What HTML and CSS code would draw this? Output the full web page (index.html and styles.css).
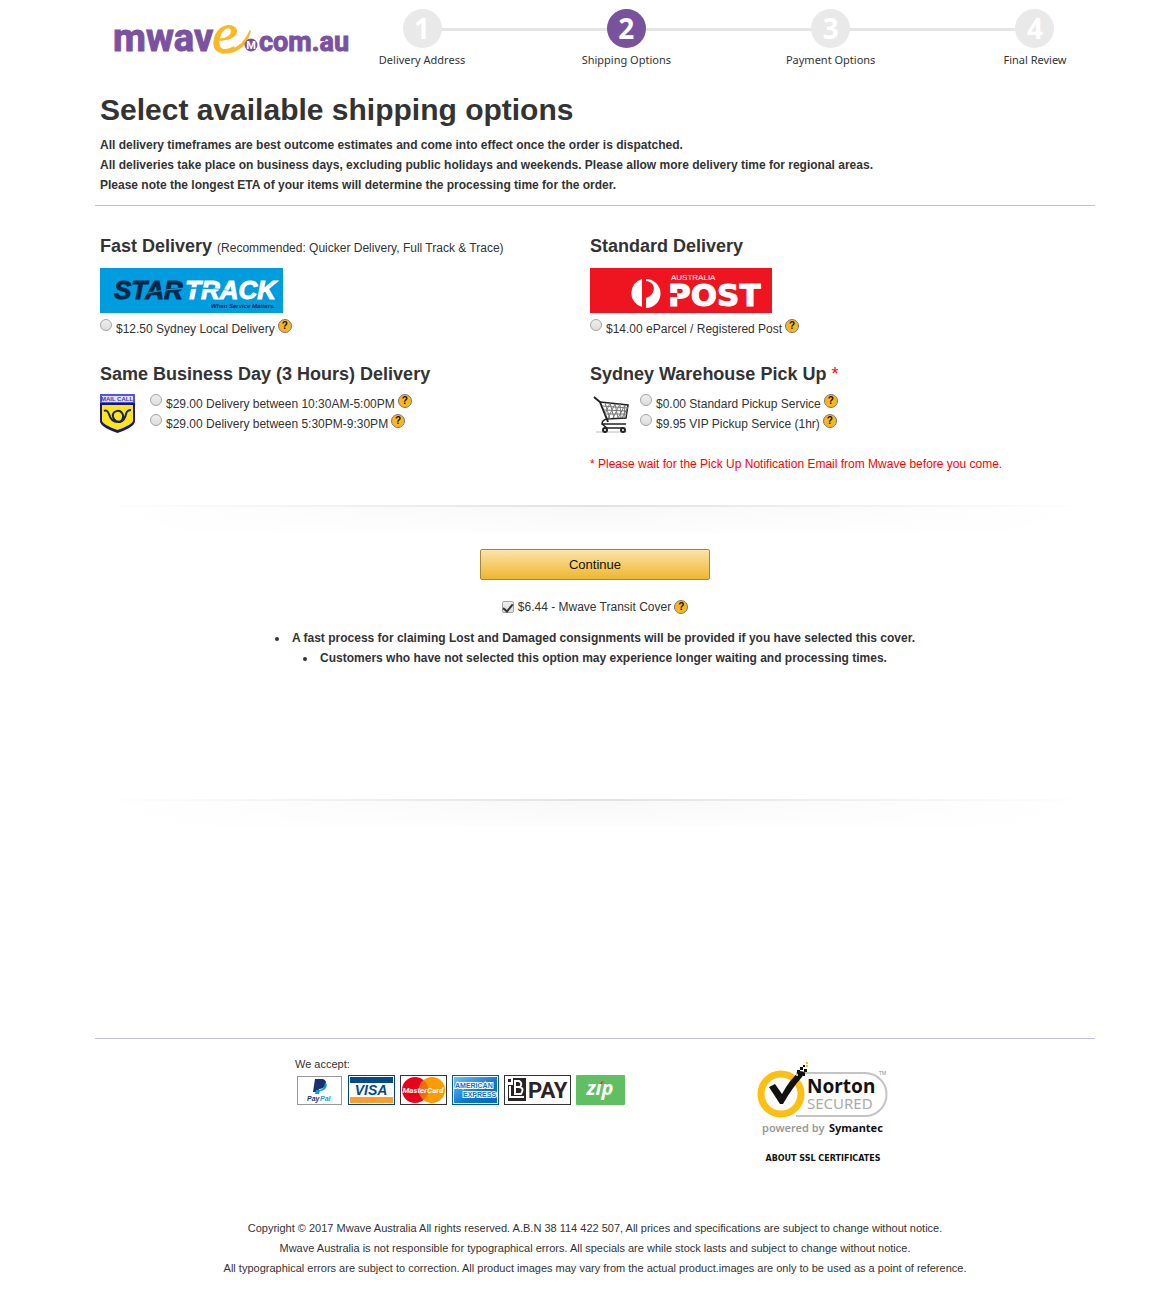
FILE: index.html
```html
<!DOCTYPE html>
<html lang="en">
<head>
<meta charset="utf-8">
<meta name="viewport" content="width=device-width, initial-scale=1">
<title>Mwave - Shipping Options</title>
<link rel="stylesheet" href="styles.css">
</head>
<body>
<div class="page">
  <header class="header">
    <a class="logo" href="#" aria-label="mwave.com.au">
      <svg width="240" height="44" viewBox="0 0 240 44">
        <g font-weight="700" fill="#7a529f" stroke="#7a529f" stroke-width="1">
          <text class="logo-text" x="1" y="36" font-size="38">mwav</text>
          <text class="logo-text" x="147" y="36" font-size="27">com.au</text>
        </g>
        <text class="logo-e" x="100" y="37" font-size="58" fill="#fbb823" stroke="#fbb823">e</text>
        <path d="M110 36.500C124 36 132 29 138 16C135 29 127 38 110 38Z" fill="#fbb823" stroke="#fbb823" stroke-width="1.500" stroke-linejoin="round"/>
        <circle cx="139" cy="30" r="6.500" fill="#7a529f"/>
        <text class="logo-text" x="139" y="34" font-size="11" font-weight="700" fill="#fff" text-anchor="middle">M</text>
      </svg>
    </a>
    <ol class="steps">
      <li class="step"><span class="step-number">1</span><span class="step-label">Delivery Address</span></li>
      <li class="step step-current" aria-current="step"><span class="step-number">2</span><span class="step-label">Shipping Options</span></li>
      <li class="step"><span class="step-number">3</span><span class="step-label">Payment Options</span></li>
      <li class="step"><span class="step-number">4</span><span class="step-label">Final Review</span></li>
    </ol>
  </header>

  <main>
    <section class="intro">
      <h1>Select available shipping options</h1>
      <p>All delivery timeframes are best outcome estimates and come into effect once the order is dispatched.<br>
      All deliveries take place on business days, excluding public holidays and weekends. Please allow more delivery time for regional areas.<br>
      Please note the longest ETA of your items will determine the processing time for the order.</p>
    </section>

    <form>
      <div class="methods">
        <section class="method">
          <h2>Fast Delivery <small>(Recommended: Quicker Delivery, Full Track &amp; Trace)</small></h2>
          <svg class="carrier" width="183" height="45" viewBox="0 0 183 45" role="img" aria-label="StarTrack">
            <rect width="183" height="45" fill="#009ce0"/>
            <g class="carrier-text" font-size="26" font-weight="700" font-style="italic">
              <text x="14" y="31" fill="#06294b" stroke="#06294b">STAR</text>
              <text x="85" y="31" fill="#fff" stroke="#fff">TRACK</text>
            </g>
            <path d="M40 27Q84 14 134 23Q84 17 40 27Z" fill="#009ce0"/>
            <text class="carrier-text" x="111" y="40" font-size="6" font-weight="700" font-style="italic" fill="#06294b">When Service Matters.</text>
          </svg>
          <div class="option">
            <input type="radio" name="shipping" id="star"><label for="star">$12.50 Sydney Local Delivery</label>
            <button class="help" type="button" aria-label="About Sydney Local Delivery">?</button>
          </div>
        </section>

        <section class="method">
          <h2>Standard Delivery</h2>
          <svg class="carrier" width="182" height="45" viewBox="0 0 182 45" role="img" aria-label="Australia Post">
            <rect width="182" height="45" fill="#ee1520"/>
            <path d="M52 11A14.500 14.500 0 0 0 52 39Z" fill="#fff"/>
            <path d="M56 11A14.500 14.500 0 0 1 56 40V30C66 27 67 14 56 13Z" fill="#fff"/>
            <text class="carrier-small" x="81" y="12" font-size="8" fill="#fff">AUSTRALIA</text>
            <text class="carrier-heavy" x="78" y="38" font-size="31" font-weight="700" fill="#fff" stroke="#fff">POST</text>
            <path d="M78 25h9v4h-9z" fill="#ee1520"/>
          </svg>
          <div class="option">
            <input type="radio" name="shipping" id="post"><label for="post">$14.00 eParcel / Registered Post</label>
            <button class="help" type="button" aria-label="About eParcel">?</button>
          </div>
        </section>

        <section class="method">
          <h2>Same Business Day (3 Hours) Delivery</h2>
          <div class="service">
            <svg width="35" height="40" viewBox="0 0 35 40" role="img" aria-label="Mail Call">
              <path d="M0 0H35V27Q35 33 17.500 39Q0 33 0 27Z" fill="#16167e"/>
              <path d="M0 0H35V9H0Z" fill="#5256d6"/>
              <path d="M2 2H33V8H2Z" fill="#dfe2ff"/>
              <path d="M2 11H33V27Q32 31 17.500 36Q3 31 2 27Z" fill="#fbe51b"/>
              <text class="carrier-small" x="17" y="7" font-size="6" font-weight="700" fill="#3a3ab8" text-anchor="middle">MAIL CALL</text>
              <path d="M4 17Q7 15 9 20Q11 28 18 28Q24 27 23 21Q21 16 17 17Q12 18 13 23Q15 28 20 28Q25 26 26 20Q27 16 31 16" fill="none" stroke="#1d1d64" stroke-width="2"/>
            </svg>
            <div>
              <div class="option">
                <input type="radio" name="shipping" id="day"><label for="day">$29.00 Delivery between 10:30AM-5:00PM</label>
                <button class="help" type="button" aria-label="About daytime delivery">?</button>
              </div>
              <div class="option">
                <input type="radio" name="shipping" id="evening"><label for="evening">$29.00 Delivery between 5:30PM-9:30PM</label>
                <button class="help" type="button" aria-label="About evening delivery">?</button>
              </div>
            </div>
          </div>
        </section>

        <section class="method">
          <h2>Sydney Warehouse Pick Up <span class="required">*</span></h2>
          <div class="service">
            <svg width="40" height="40" viewBox="0 0 40 40" fill="none" stroke="#222" role="img" aria-label="Shopping cart">
              <path d="M4 3L10 8L18 28" stroke-width="2"/>
              <path d="M10 8L38 11L36 24L17 25" stroke-width="1.500"/>
              <path d="M12 12L38 14M14 16L37 17M15 20L37 20M15 9L20 25M20 9L24 24M25 10L28 24M30 10L31 24M35 11L34 24M20 9L15 20M25 10L18 24M30 10L23 24M35 11L28 24M38 13L32 24" stroke-width="1" stroke="#777"/>
              <path d="M17 25Q12 26 12 30H36M12 30L17 34H33" stroke-width="1.500"/>
              <path d="M6 38H37" stroke="#ddd" stroke-width="2"/>
              <circle cx="15" cy="36" r="2" stroke-width="2"/><circle cx="33" cy="36" r="2" stroke-width="2"/>
            </svg>
            <div>
              <div class="option">
                <input type="radio" name="shipping" id="pickup"><label for="pickup">$0.00 Standard Pickup Service</label>
                <button class="help" type="button" aria-label="About standard pickup">?</button>
              </div>
              <div class="option">
                <input type="radio" name="shipping" id="vip"><label for="vip">$9.95 VIP Pickup Service (1hr)</label>
                <button class="help" type="button" aria-label="About VIP pickup">?</button>
              </div>
            </div>
          </div>
          <p class="notice">* Please wait for the Pick Up Notification Email from Mwave before you come.</p>
        </section>
      </div>

      <div class="confirm">
        <button class="continue" type="submit">Continue</button>
        <div class="cover">
          <input type="checkbox" id="cover" checked><label for="cover">$6.44 - Mwave Transit Cover</label>
          <button class="help" type="button" aria-label="About Transit Cover">?</button>
        </div>
        <ul class="cover-notes">
          <li>A fast process for claiming Lost and Damaged consignments will be provided if you have selected this cover.</li>
          <li>Customers who have not selected this option may experience longer waiting and processing times.</li>
        </ul>
      </div>
    </form>
    <div class="spacer"></div>
  </main>

  <footer class="footer">
    <div class="trust">
      <div class="accept">
        <p>We accept:</p>
        <div class="cards">
          <svg width="46" height="30" viewBox="0 0 46 30" role="img" aria-label="PayPal">
            <rect x=".5" y="1.500" width="44" height="28" fill="#fff" stroke="#999"/>
            <path d="M18 4H26Q31 6 28 11Q26 14 22 14L21 17H16Z" fill="#15346f"/>
            <path d="M28 7Q31 9 29 13Q27 16 23 16L22 19H18L19 15H22Q28 14 28 7Z" fill="#179bd7"/>
            <g class="carrier-text" font-size="7" font-weight="700" font-style="italic"><text x="10" y="26" fill="#15346f">Pay</text><text x="23" y="26" fill="#179bd7">Pal</text></g>
          </svg>
          <svg width="47" height="30" viewBox="0 0 47 30" role="img" aria-label="Visa">
            <rect x=".5" y=".5" width="46" height="29" fill="#fff" stroke="#00457c"/>
            <path d="M2 2H45V8H2Z" fill="#004b87"/><path d="M2 22H45V28H2Z" fill="#fc9d2c"/>
            <text class="carrier-text" x="23" y="20" font-size="14" font-weight="700" font-style="italic" fill="#004b87" text-anchor="middle">VISA</text>
          </svg>
          <svg width="47" height="30" viewBox="0 0 47 30" role="img" aria-label="MasterCard">
            <rect x=".5" y=".5" width="46" height="29" fill="#fff" stroke="#333"/>
            <circle cx="15" cy="15" r="13" fill="#e9001b"/><circle cx="32" cy="15" r="13" fill="#ff9b00"/>
            <path d="M23.500 5A13 13 0 0 1 23.500 25A13 13 0 0 1 23.500 5Z" fill="#f26a12"/>
            <text class="mastercard" x="23" y="18" font-size="8" font-weight="700" font-style="italic" fill="#fff" text-anchor="middle">MasterCard</text>
          </svg>
          <svg width="47" height="30" viewBox="0 0 47 30" role="img" aria-label="American Express">
            <defs><linearGradient id="amex" x2="1" y2="1"><stop stop-color="#6cc0f2"/><stop offset=".6" stop-color="#0a74d0"/><stop offset="1" stop-color="#0667c4"/></linearGradient></defs>
            <rect x=".5" y=".5" width="46" height="29" fill="#fff" stroke="#0057a8"/>
            <path d="M2 2H45V28H2Z" fill="url(#amex)"/>
            <g class="carrier-text" font-size="7" font-weight="700" fill="#1272c8" stroke="#fff" stroke-width="2" paint-order="stroke"><text x="3" y="13">AMERICAN</text><text x="11" y="22">EXPRESS</text></g>
          </svg>
          <svg width="67" height="30" viewBox="0 0 67 30" role="img" aria-label="BPAY">
            <rect x=".5" y=".5" width="66" height="29" fill="#fff" stroke="#333"/>
            <path d="M9 3H22V26H4V10H9Z" fill="#2a2326"/><path d="M4 4H7V7H4Z" fill="#2a2326"/>
            <path d="M6 11V22H20M11 5V20M11 6H15Q19 8 16 12H11M15 12Q21 13 17 19H11" fill="none" stroke="#fff" stroke-width="2"/>
            <text class="bpay" x="24" y="23" font-size="22" font-weight="700" fill="#2a2326">PAY</text>
          </svg>
          <svg width="49" height="30" viewBox="0 0 49 30" role="img" aria-label="zip">
            <rect width="49" height="30" rx="1" fill="#5fbf62"/>
            <text class="zip" x="24" y="20" font-size="20" font-weight="700" font-style="italic" fill="#fff" text-anchor="middle">zıp</text>
            <path d="M25 7L28 6L26 9H24Z" fill="#e8352e"/>
          </svg>
        </div>
      </div>
      <div class="seal">
        <svg width="134" height="76" viewBox="0 0 134 76" role="img" aria-label="Norton Secured, powered by Symantec">
          <path d="M40 11H109A21 21 0 0 1 109 54H40" fill="none" stroke="#c4c4c4" stroke-width="2"/>
          <circle cx="25" cy="32" r="20" fill="#fff" stroke="#fdbf12" stroke-width="7"/>
          <path d="M13 25L19 22L26 32Q34 17 44 9L49 10L46 15Q36 26 27 42H24Z" fill="#111"/>
          <path d="M44 5h3v3h-3zM48 7h3v3h-3zM47 3h2v2h-2zM41 8h3v3h-3zM47 11h2v3h-2z" fill="#111"/>
          <path d="M50 0h2v2h-2zM50 3h2v2h-2zM40 12h2v2h-2z" fill="#fdbf12"/>
          <text class="norton" x="51" y="31" font-size="19" font-weight="700" fill="#111">Norton</text>
          <text class="norton" x="51" y="47" font-size="15" fill="#aaa">SECURED</text>
          <text class="norton" x="123" y="13" font-size="5" fill="#888">TM</text>
          <text class="norton" x="6" y="70" font-size="11" fill="#999" font-weight="600">powered by</text>
          <text class="norton" x="73" y="70" font-size="11" fill="#111" font-weight="700">Symantec</text>
        </svg>
        <a class="ssl" href="#">ABOUT SSL CERTIFICATES</a>
      </div>
    </div>
    <p class="legal">Copyright © 2017 Mwave Australia All rights reserved. A.B.N 38 114 422 507, All prices and specifications are subject to change without notice.<br>
    Mwave Australia is not responsible for typographical errors. All specials are while stock lasts and subject to change without notice.<br>
    All typographical errors are subject to correction. All product images may vary from the actual product.images are only to be used as a point of reference.</p>
  </footer>
</div>
</body>
</html>
```
FILE: styles.css
```css
* { box-sizing: border-box; }

body {
  margin: 0;
  padding-left: 35px;
  background: #fff;
  color: #333;
  font: 12px/20px "Liberation Sans", Arial, sans-serif;
}

h1, h2, p, ul, ol { margin: 0; padding: 0; }

.page { max-width: 1000px; margin: 0 auto; }

/* Header */
.header {
  display: flex;
  justify-content: space-between;
  padding: 9px 17px 0 17px;
}
.logo { display: block; padding-top: 6px; }
.logo svg { display: block; overflow: visible; }
.logo-text { font-family: Roboto, sans-serif; }
.logo-e { font-family: "Liberation Serif", serif; font-style: italic; }

.steps {
  display: flex;
  justify-content: space-between;
  flex: 0 1 699px;
  list-style: none;
  background: linear-gradient(#e5e5e5, #e5e5e5) no-repeat center 19px / calc(100% - 86px) 3px;
}
.step {
  display: flex;
  flex-direction: column;
  align-items: center;
  width: 86px;
}
.step-number {
  width: 39px;
  height: 39px;
  border-radius: 50%;
  background: #e9e9e9;
  color: #fff;
  font: 700 28px/38px "Open Sans", sans-serif;
  text-align: center;
}
.step-current .step-number { background: #79529e; }
.step-label {
  font: 11px/24px "Noto Sans", sans-serif;
  white-space: nowrap;
}

/* Intro */
.intro {
  padding: 18px 5px 10px;
  border-bottom: 1px solid #c5c0df;
}
h1 { font-size: 30px; line-height: 40px; }
.intro p { padding-top: 5px; font-weight: 700; }

/* Delivery methods */
.methods {
  display: grid;
  grid-template-columns: 1fr 1fr;
  row-gap: 20px;
  padding: 25px 15px 31px 5px;
}
h2 { font-size: 18px; line-height: 30px; }
h2 small { font-size: 12px; font-weight: 400; line-height: 1; }
.required { color: #f00; font-weight: 400; }
.carrier { display: block; margin: 7px 0 6px; }
.carrier-text,
.carrier-small { font-family: "Liberation Sans", sans-serif; }
.carrier-heavy { font-family: "DejaVu Sans", sans-serif; }
.mastercard,
.bpay { font-family: Roboto, sans-serif; }
.zip { font-family: "Open Sans", sans-serif; }

.service {
  display: grid;
  grid-template-columns: 50px 1fr;
  padding-top: 5px;
}
.option {
  display: flex;
  align-items: flex-start;
  gap: 3px;
}
.notice { padding-top: 20px; color: #f00; }

input[type="radio"], input[type="checkbox"] {
  appearance: none;
  flex: none;
  width: 12px;
  height: 12px;
  margin: 0 1px 0 0;
  border: 1px solid #a5a5a5;
  border-radius: 50%;
  background: linear-gradient(#eee, #ddd);
}
input[type="radio"]:checked { background: radial-gradient(#555 3px, #e5e5e5 4px); }
input[type="checkbox"] {
  display: grid;
  place-items: center;
  border-radius: 2px;
}
input[type="checkbox"]:checked::before {
  content: "";
  width: 4px;
  height: 8px;
  border: solid #333;
  border-width: 0 2px 2px 0;
  transform: rotate(40deg);
}

.help {
  flex: none;
  width: 14px;
  height: 14px;
  padding: 0;
  border: 1px solid #777;
  border-radius: 50%;
  background: #fbb522;
  color: #111;
  font: 700 10px/12px "Liberation Sans", sans-serif;
  text-align: center;
}

/* Confirmation, between two soft shadows */
.confirm, .spacer {
  background:
    linear-gradient(90deg, #fff, transparent 50%, #fff) no-repeat 0 0 / 100% 29px,
    linear-gradient(#e2e2e2 2px, #f8f8f8 2px, #fdfdfd 28px) no-repeat 0 0 / 100% 28px;
}
.confirm {
  display: flex;
  flex-direction: column;
  align-items: center;
  min-height: 294px;
  padding-top: 44px;
}
.continue {
  width: 230px;
  height: 31px;
  border: 1px solid #a88734;
  border-radius: 2px;
  background: linear-gradient(#fce3a9, #edb72f);
  color: #111;
  font: 13px "Liberation Sans", sans-serif;
}
.cover {
  display: flex;
  align-items: center;
  gap: 3px;
  padding: 17px 0 11px;
}
.cover-notes {
  font-weight: 700;
  list-style-position: inside;
  text-align: center;
}
.spacer { height: 239px; }

/* Footer */
.footer {
  padding: 15px 5px;
  border-top: 1px solid #c5c0df;
  font-size: 11px;
}
.trust {
  display: flex;
  gap: 131px;
  padding-left: 195px;
}
.cards {
  display: flex;
  gap: 5px;
  padding: 1px 0 0 2px;
}
.seal {
  display: flex;
  flex-direction: column;
  align-items: center;
  padding-top: 8px;
}
.norton { font-family: "Noto Sans", sans-serif; }
.ssl {
  padding-top: 11px;
  color: #111;
  font: 700 8px/20px "DejaVu Sans", sans-serif;
  text-decoration: none;
}
.legal { padding-top: 49px; text-align: center; }
```
